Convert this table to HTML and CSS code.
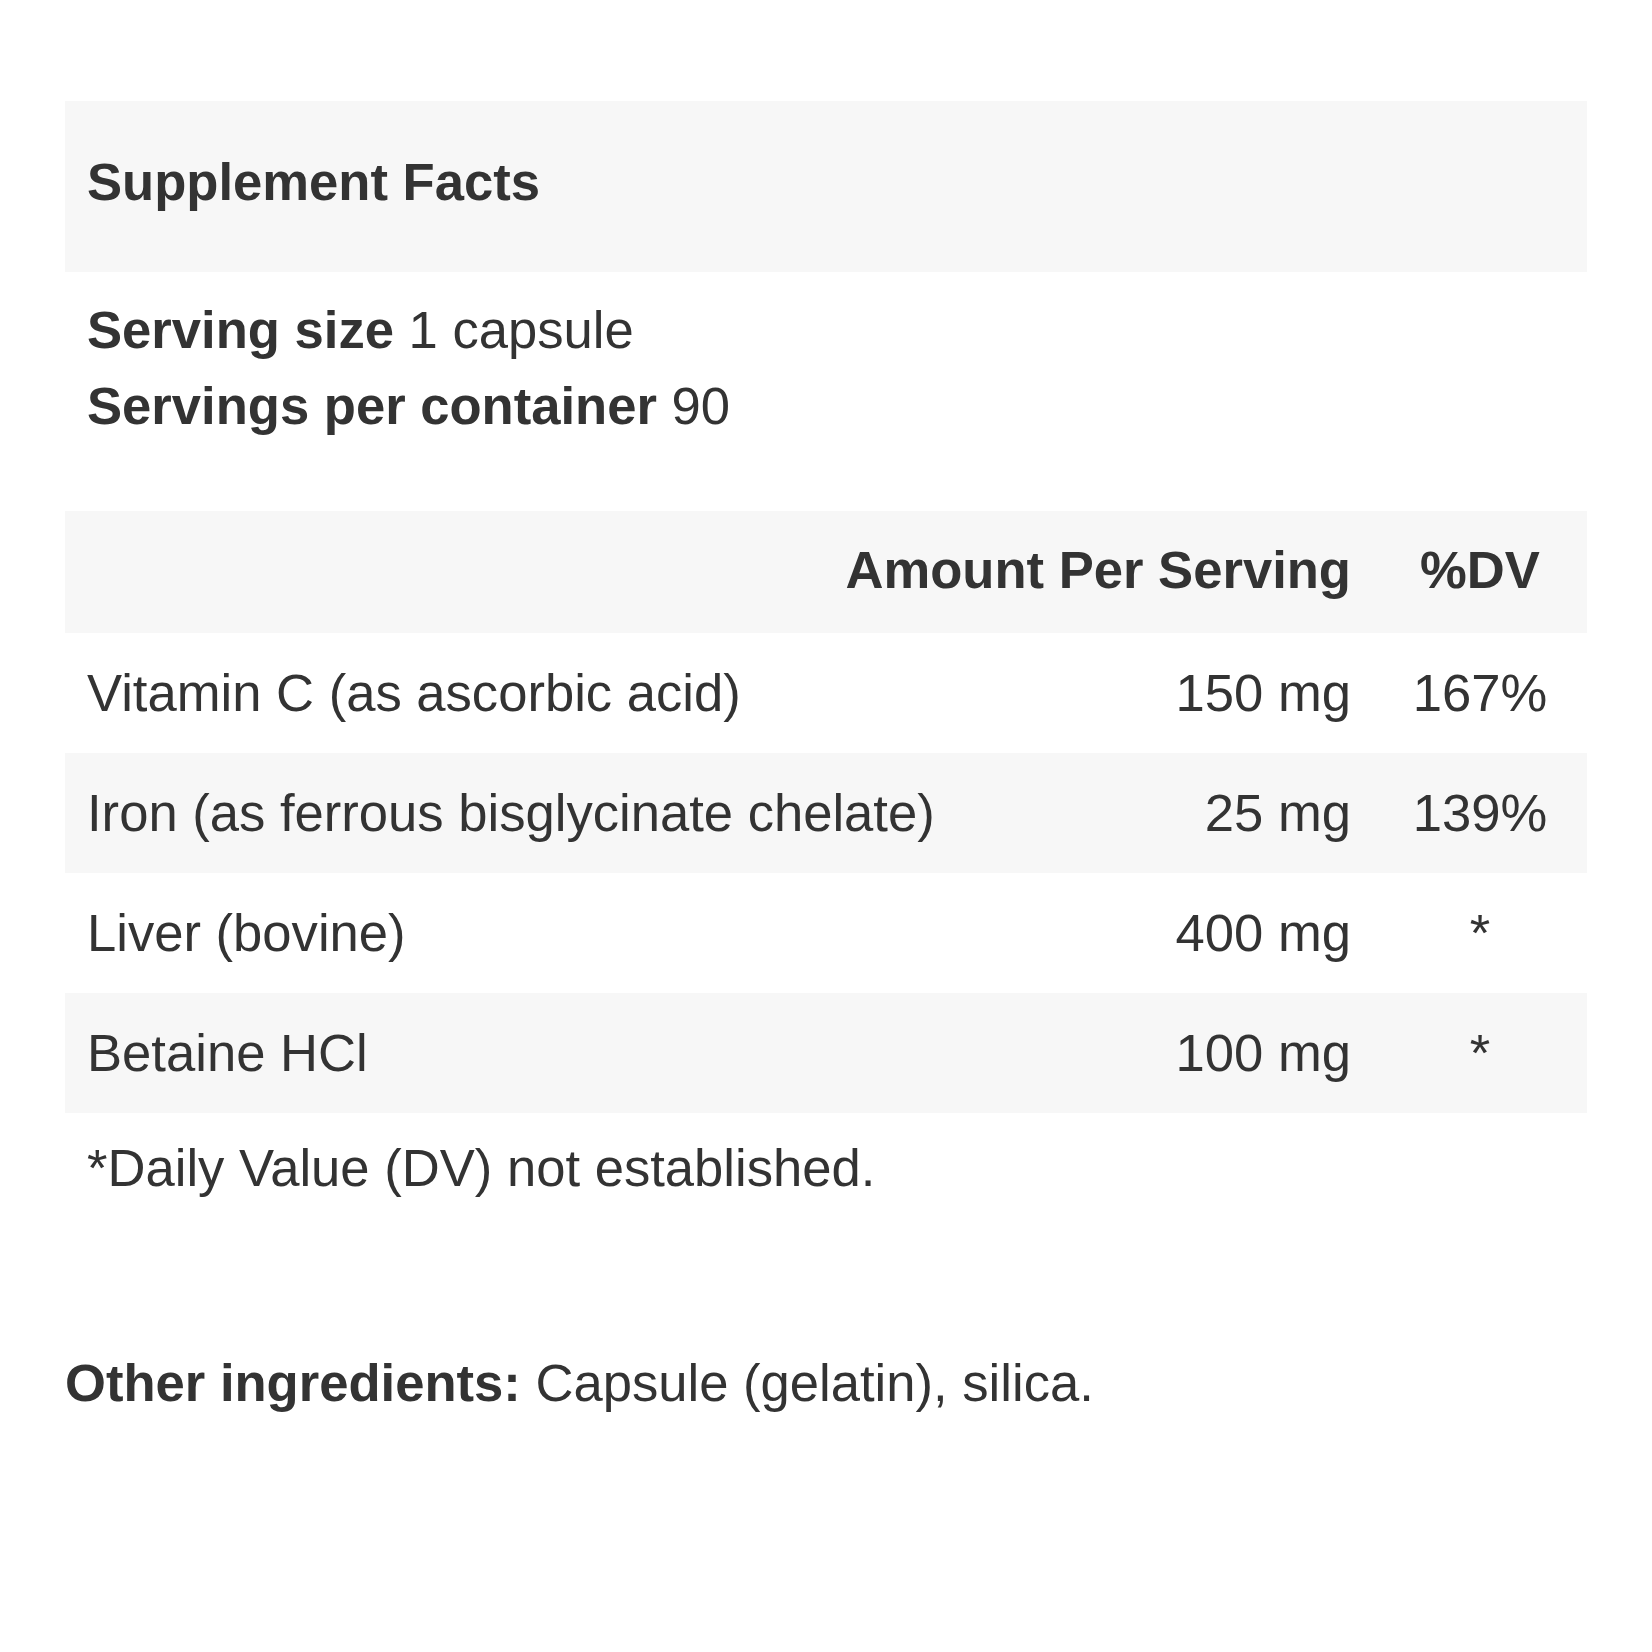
FILE: index.html
```html
<!DOCTYPE html>
<html lang="en">
<head>
<meta charset="utf-8">
<title>Supplement Facts</title>
<link rel="stylesheet" href="styles.css">
</head>
<body>
<main class="page">
  <section class="facts">
    <h1 class="facts-title">Supplement Facts</h1>
    <div class="serving">
      <p class="serving-line"><strong>Serving size</strong> 1 capsule</p>
      <p class="serving-line"><strong>Servings per container</strong> 90</p>
    </div>
    <div class="table">
      <div class="row row-head">
        <div class="cell cell-name"></div>
        <div class="cell cell-amount">Amount Per Serving</div>
        <div class="cell cell-dv">%DV</div>
      </div>
      <div class="row">
        <div class="cell cell-name">Vitamin C (as ascorbic acid)</div>
        <div class="cell cell-amount">150 mg</div>
        <div class="cell cell-dv">167%</div>
      </div>
      <div class="row row-alt">
        <div class="cell cell-name">Iron (as ferrous bisglycinate chelate)</div>
        <div class="cell cell-amount">25 mg</div>
        <div class="cell cell-dv">139%</div>
      </div>
      <div class="row">
        <div class="cell cell-name">Liver (bovine)</div>
        <div class="cell cell-amount">400 mg</div>
        <div class="cell cell-dv">*</div>
      </div>
      <div class="row row-alt">
        <div class="cell cell-name">Betaine HCl</div>
        <div class="cell cell-amount">100 mg</div>
        <div class="cell cell-dv">*</div>
      </div>
    </div>
    <p class="footnote">*Daily Value (DV) not established.</p>
  </section>
  <p class="other"><strong>Other ingredients:</strong> Capsule (gelatin), silica.</p>
</main>
</body>
</html>
```

FILE: styles.css
```css
html, body {
  margin: 0;
  padding: 0;
  background: #ffffff;
}

body {
  font-family: "Liberation Sans", Arial, Helvetica, sans-serif;
  font-size: 52.6px;
  line-height: 76px;
  color: #333333;
}

.page {
  padding: 101px 65px 0;
}

.facts-title {
  margin: 0;
  height: 171px;
  box-sizing: border-box;
  padding: 0 22px 10px;
  display: flex;
  align-items: center;
  background: #f7f7f7;
  font-size: 52.6px;
  font-weight: bold;
}

.serving {
  padding: 20px 22px 0;
  margin-bottom: 67px;
}

.serving-line {
  margin: 0;
}

.table {
  display: flex;
  flex-direction: column;
}

.row {
  display: grid;
  grid-template-columns: 1fr auto 214px;
  align-items: center;
  height: 120px;
}

.row-head {
  height: 122px;
  padding-bottom: 4px;
  box-sizing: border-box;
  background: #f7f7f7;
  font-weight: bold;
}

.row-alt {
  background: #f7f7f7;
}

.cell-name {
  padding-left: 22px;
}

.cell-amount {
  text-align: right;
  padding-right: 22px;
}

.cell-dv {
  text-align: center;
}

.footnote {
  margin: 0;
  padding: 17px 22px 0;
}

.other {
  margin: 139px 0 0;
}
```
